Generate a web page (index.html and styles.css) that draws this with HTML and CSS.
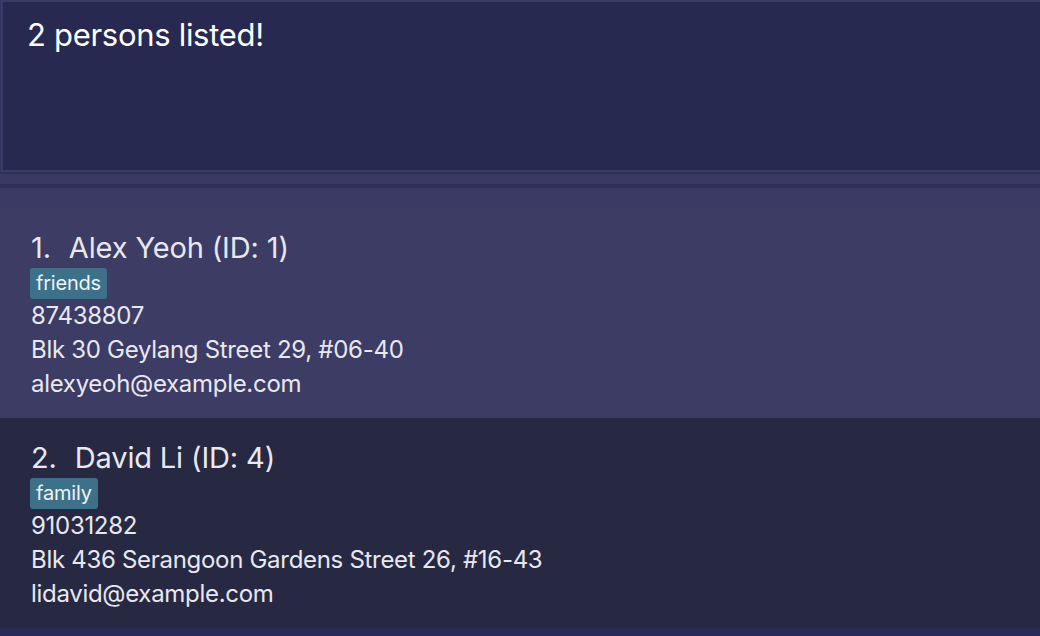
FILE: index.html
```html
<!DOCTYPE html>
<html>
<head>
<meta charset="utf-8">
<link rel="stylesheet" href="styles.css">
</head>
<body>
<div class="app">
  <div class="result-pane">
    <div class="result-box">2 persons listed!</div>
  </div>
  <div class="divider"><div class="divider-bar"></div></div>
  <div class="list">
    <div class="list-pad"></div>
    <div class="card card-odd">
      <div class="name-row"><span class="index">1.</span><span class="name">Alex Yeoh (ID: 1)</span></div>
      <div class="tags"><span class="tag">friends</span></div>
      <div class="detail">87438807</div>
      <div class="detail">Blk 30 Geylang Street 29, #06-40</div>
      <div class="detail">alexyeoh@example.com</div>
    </div>
    <div class="card card-even">
      <div class="name-row"><span class="index">2.</span><span class="name">David Li (ID: 4)</span></div>
      <div class="tags"><span class="tag">family</span></div>
      <div class="detail">91031282</div>
      <div class="detail">Blk 436 Serangoon Gardens Street 26, #16-43</div>
      <div class="detail">lidavid@example.com</div>
    </div>
  </div>
</div>
</body>
</html>
```

FILE: styles.css
```css
html, body {
  margin: 0;
  padding: 0;
}
body {
  background: #282a58;
  font-family: Inter, "Noto Sans", sans-serif;
  width: 1040px;
  height: 636px;
  overflow: hidden;
}
.app {
  display: flex;
  flex-direction: column;
  height: 636px;
}
.result-pane {
  background: #343560;
  padding: 0 0 0 1px;
}
.result-box {
  box-sizing: border-box;
  height: 172px;
  border-top: 2px solid #3a3b66;
  border-left: 2px solid #3a3b66;
  border-bottom: 2px solid #3a3b66;
  background: #272950;
  color: #ffffff;
  font-size: 31px;
  letter-spacing: -0.3px;
  padding: 13px 0 0 24px;
  line-height: 40px;
}
.divider {
  background: #2f3058;
  padding: 2px 0 4px 0;
}
.divider-bar {
  height: 10px;
  background: #393a64;
}
.list {
  flex: 1;
  background: #282a58;
  display: flex;
  flex-direction: column;
}
.list-pad {
  height: 20px;
  background: #3a3a64;
}
.card {
  height: 210px;
  box-sizing: border-box;
  padding: 22px 0 0 31px;
  color: #e8e8f0;
}
.card-odd {
  background: #3c3c64;
}
.card-even {
  background: #272842;
}
.name-row {
  font-size: 29px;
  line-height: 36px;
  letter-spacing: -0.15px;
  display: flex;
}
.index {
  margin-right: 18px;
}
.tags {
  display: flex;
  margin-top: 2px;
}
.tag {
  background: #3d7089;
  color: #f0f4f8;
  font-size: 20px;
  letter-spacing: -0.2px;
  line-height: 31px;
  padding: 0 6px 0 6px;
  margin-left: -1px;
  border-radius: 3px;
}
.detail {
  font-size: 24px;
  letter-spacing: -0.3px;
  line-height: 34px;
}
```
